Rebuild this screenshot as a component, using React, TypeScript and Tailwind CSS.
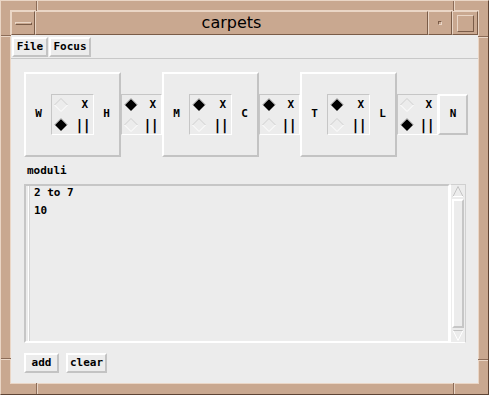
import React from "react";

const mono = "font-['DejaVu_Sans_Mono','Liberation_Mono',monospace] font-bold text-[11px] text-black";

function Diamond({ on }: { on: boolean }) {
  return (
    <svg width="14" height="14" viewBox="0 0 14 14" className="shrink-0">
      {on ? (
        <>
          <polygon points="7,1 13,7 7,13 1,7" fill="#000" />
          <polyline points="0.5,7 7,0.5 13.5,7" fill="none" stroke="#9c9c9c" />
        </>
      ) : (
        <>
          <polyline points="0.5,7 7,0.5 13.5,7" fill="none" stroke="#cfcfcf" />
          <polyline points="0.5,7 7,13.5 13.5,7" fill="none" stroke="#ffffff" />
        </>
      )}
    </svg>
  );
}

function RadioBox({ top, wide }: { top: boolean; wide?: boolean }) {
  return (
    <div
      className={`${wide ? "w-[43px]" : "w-[41px]"} h-[41px] shrink-0 border border-t-[#c6c6c6] border-l-[#c6c6c6] border-b-white border-r-white flex flex-col justify-center gap-[6px] ${mono}`}
    >
      <div className="flex items-center h-[14px] pl-[2px] pr-[5px]">
        <Diamond on={top} />
        <span className="ml-auto leading-[14px]">X</span>
      </div>
      <div className="flex items-center h-[14px] pl-[2px] pr-[3px]">
        <Diamond on={!top} />
        <span className="ml-auto leading-[14px] text-[14px] tracking-[-1px]">||</span>
      </div>
    </div>
  );
}

function Group({ left, right, top }: { left: string; right: string; top: boolean }) {
  return (
    <div className="w-[97px] h-[85px] shrink-0 border-2 border-t-white border-l-white border-b-[#c3c3c3] border-r-[#c3c3c3] flex items-center">
      <span className={`w-[25px] text-center ${mono}`}>{left}</span>
      <RadioBox top={top} wide />
      <span className={`w-[25px] text-center ${mono}`}>{right}</span>
    </div>
  );
}

function Raised({ children, className }: { children: React.ReactNode; className: string }) {
  return (
    <div
      className={`border-2 border-t-white border-l-white border-b-[#c3c3c3] border-r-[#c3c3c3] flex items-center justify-center ${mono} ${className}`}
    >
      {children}
    </div>
  );
}

function Notch({ className }: { className: string }) {
  return <div className={`absolute ${className}`} />;
}

export default function App() {
  return (
    <div className="relative w-[489px] h-[395px] bg-[#c9a890] border border-t-[#ead6c6] border-l-[#ead6c6] border-b-[#5e4434] border-r-[#5e4434] pt-[9px] pl-[9px] pr-[9px] pb-[10px]">
      {/* frame notches */}
      <Notch className="left-[35px] top-0 w-[2px] h-[10px] border-l border-l-[#8c6c58] border-r border-r-[#ead6c6]" />
      <Notch className="left-[452px] top-0 w-[2px] h-[10px] border-l border-l-[#8c6c58] border-r border-r-[#ead6c6]" />
      <Notch className="left-[35px] bottom-0 w-[2px] h-[11px] border-l border-l-[#8c6c58] border-r border-r-[#ead6c6]" />
      <Notch className="left-[452px] bottom-0 w-[2px] h-[11px] border-l border-l-[#8c6c58] border-r border-r-[#ead6c6]" />
      <Notch className="left-0 top-[34px] w-[10px] h-[2px] border-t border-t-[#8c6c58] border-b border-b-[#ead6c6]" />
      <Notch className="right-0 top-[35px] w-[10px] h-[2px] border-t border-t-[#8c6c58] border-b border-b-[#ead6c6]" />
      <Notch className="left-0 top-[357px] w-[10px] h-[2px] border-t border-t-[#8c6c58] border-b border-b-[#ead6c6]" />
      <Notch className="right-0 top-[358px] w-[10px] h-[2px] border-t border-t-[#8c6c58] border-b border-b-[#ead6c6]" />

      <div className="w-full h-full border border-[#ead6c6] flex flex-col">
        {/* title bar */}
        <div className="h-[24px] shrink-0 flex">
          <div className="w-[24px] border border-t-[#ead6c6] border-l-[#ead6c6] border-b-[#7a5c48] border-r-[#7a5c48] flex items-center justify-center">
            <div className="w-[17px] h-[3px] border border-t-[#ead6c6] border-l-[#ead6c6] border-b-[#7a5c48] border-r-[#7a5c48]" />
          </div>
          <div className="flex-1 border border-t-[#ead6c6] border-l-[#ead6c6] border-b-[#7a5c48] border-r-[#7a5c48] flex items-center justify-center font-['DejaVu_Sans',sans-serif] text-[16px] text-black leading-none">
            carpets
          </div>
          <div className="w-[24px] border border-t-[#ead6c6] border-l-[#ead6c6] border-b-[#7a5c48] border-r-[#7a5c48] flex items-center justify-center">
            <div className="w-[4px] h-[4px] border border-t-[#7a5c48] border-l-[#7a5c48] border-b-[#ead6c6] border-r-[#ead6c6]" />
          </div>
          <div className="w-[26px] border border-t-[#ead6c6] border-l-[#ead6c6] border-b-[#7a5c48] border-r-[#7a5c48] flex items-center justify-center">
            <div className="w-[17px] h-[17px] border border-t-[#ead6c6] border-l-[#ead6c6] border-b-[#7a5c48] border-r-[#7a5c48]" />
          </div>
        </div>

        {/* client */}
        <div className="flex-1 bg-[#ececec] flex flex-col">
          <div className="h-[24px] shrink-0 flex items-start pt-[2px] pl-[1px] border-b border-b-[#c8c8c8]">
            <Raised className="w-[36px] h-[20px]">File</Raised>
            <Raised className="w-[42px] h-[20px] ml-[1px]">Focus</Raised>
          </div>

          <div className="flex flex-col pl-[13px]">
            <div className="flex items-center mt-[13px]">
              <Group left="W" right="H" top={false} />
              <RadioBox top={true} />
              <Group left="M" right="C" top={true} />
              <RadioBox top={true} />
              <Group left="T" right="L" top={true} />
              <RadioBox top={false} />
              <Raised className="w-[30px] h-[41px]">N</Raised>
            </div>

            <div className={`mt-[7px] h-[14px] leading-[14px] pl-[3px] ${mono}`}>moduli</div>

            <div className="mt-[6px] flex h-[159px] w-[442px]">
              <div className="w-[426px] border-2 border-t-[#c6c6c6] border-l-[#c6c6c6] border-b-white border-r-white flex">
                <div className="ml-[2px] w-[2px] border-l border-l-white border-r border-r-[#d4d4d4]" />
                <div className={`pl-[4px] flex flex-col gap-[4px] ${mono}`}>
                  <div className="leading-[14px]">2 to 7</div>
                  <div className="leading-[14px]">10</div>
                </div>
              </div>
              <div className="w-[16px] border border-t-[#d0d0d0] border-l-white border-b-white border-r-[#d0d0d0] flex flex-col items-center py-[1px]">
                <svg width="12" height="11" viewBox="0 0 12 11" className="shrink-0">
                  <polyline points="1,10.5 6,0.5 11,10.5" fill="none" stroke="#c4c4c4" />
                  <line x1="1" y1="10.5" x2="11" y2="10.5" stroke="#ffffff" />
                </svg>
                <div className="flex-1 w-[12px] my-[2px] border-2 border-t-white border-l-white border-b-[#c6c6c6] border-r-[#c6c6c6]" />
                <svg width="12" height="11" viewBox="0 0 12 11" className="shrink-0">
                  <line x1="1" y1="0.5" x2="11" y2="0.5" stroke="#c4c4c4" />
                  <polyline points="1,0.5 6,10.5 11,0.5" fill="none" stroke="#ffffff" />
                </svg>
              </div>
            </div>

            <div className="mt-[10px] flex gap-[7px]">
              <Raised className="w-[35px] h-[20px]">add</Raised>
              <Raised className="w-[41px] h-[20px]">clear</Raised>
            </div>
          </div>
        </div>
      </div>
    </div>
  );
}
